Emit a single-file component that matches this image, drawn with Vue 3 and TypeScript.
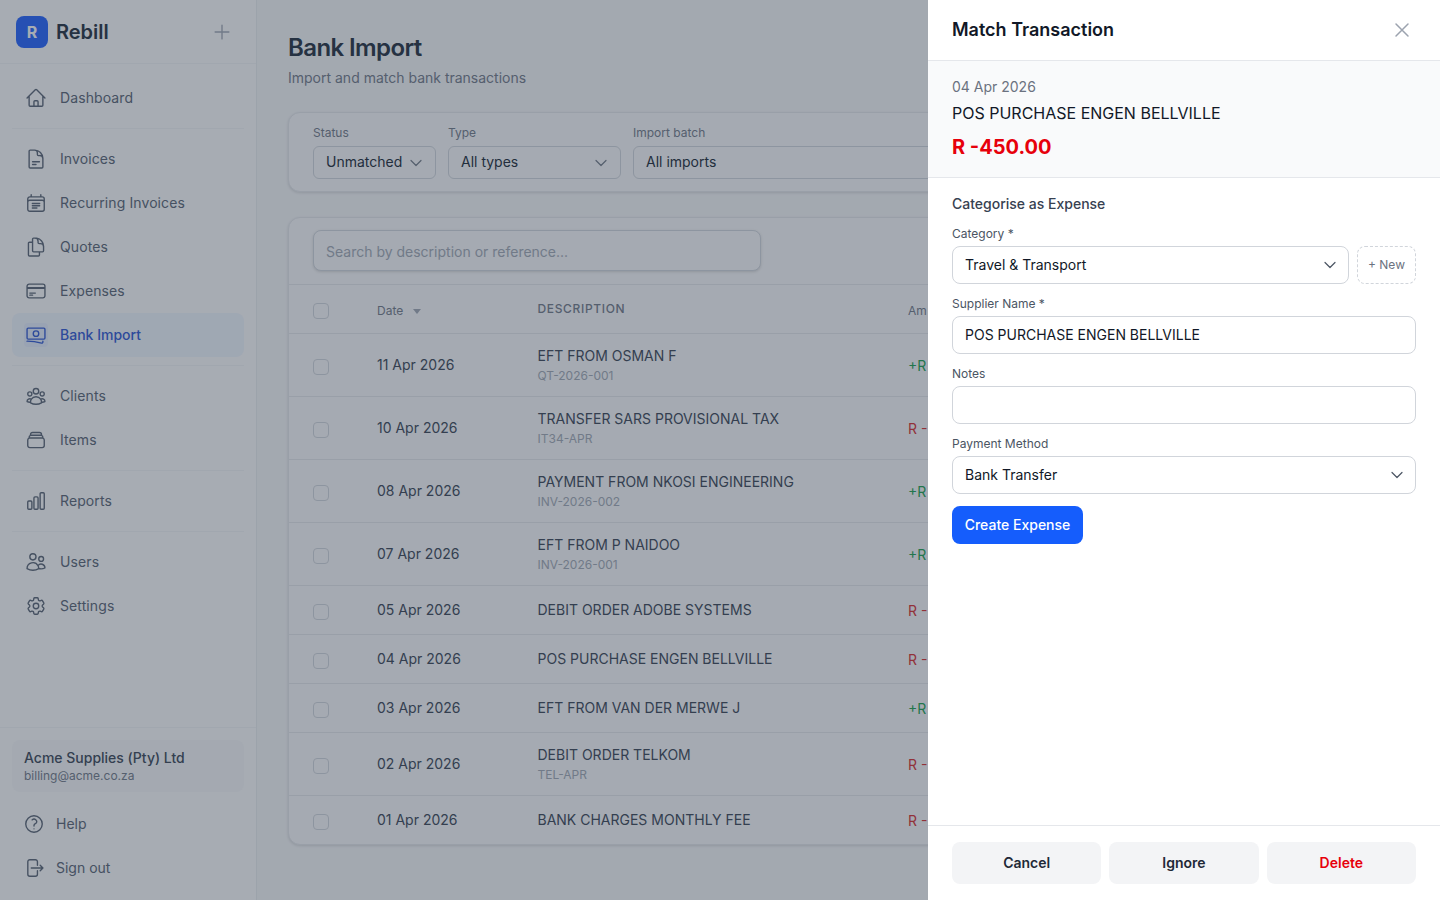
<script setup lang="ts">
interface NavItem { label: string; icon: string; active?: boolean }
const icons: Record<string, string> = {
  home: 'M2.25 12l8.954-8.955c.44-.439 1.152-.439 1.591 0L21.75 12M4.5 9.75v10.125c0 .621.504 1.125 1.125 1.125H9.75v-4.875c0-.621.504-1.125 1.125-1.125h2.25c.621 0 1.125.504 1.125 1.125V21h4.125c.621 0 1.125-.504 1.125-1.125V9.75M8.25 21h8.25',
  doc: 'M8.25 15h7.5m-7.5 3H12M10.5 2.25H5.625c-.621 0-1.125.504-1.125 1.125v17.25c0 .621.504 1.125 1.125 1.125h12.75c.621 0 1.125-.504 1.125-1.125V11.25a9 9 0 00-9-9zM10.5 2.25c1.6 0 3 1.4 3 3v1.9c0 .6.5 1.1 1.1 1.1h1.5a3.375 3.375 0 013.4 3',
  cal: 'M6.75 3v2.25M17.25 3v2.25M3 18.75V7.5a2.25 2.25 0 012.25-2.25h13.5A2.25 2.25 0 0121 7.5v11.25m-18 0A2.25 2.25 0 005.25 21h13.5A2.25 2.25 0 0021 18.75m-18 0v-7.5A2.25 2.25 0 015.25 9h13.5A2.25 2.25 0 0121 11.25v7.5M8 12.5h8M8 15h8M8 17.5h5',
  dup: 'M15.75 17.25v3.375c0 .621-.504 1.125-1.125 1.125h-9.75a1.125 1.125 0 01-1.125-1.125V7.875c0-.621.504-1.125 1.125-1.125H6.75a9.06 9.06 0 011.5.124m7.5 10.376h3.375c.621 0 1.125-.504 1.125-1.125V11.25c0-4.46-3.243-8.161-7.5-8.876a9.06 9.06 0 00-1.5-.124H9.375c-.621 0-1.125.504-1.125 1.125v3.5m7.5 10.375H9.375a1.125 1.125 0 01-1.125-1.125v-9.25m12 6.625v-1.875a3.375 3.375 0 00-3.375-3.375h-1.5a1.125 1.125 0 01-1.125-1.125v-1.5a3.375 3.375 0 00-3.375-3.375H9.75',
  card: 'M2.25 8.25h19.5M2.25 9h19.5m-16.5 5.25h6m-6 2.25h3m-3.75 3h15a2.25 2.25 0 002.25-2.25V6.75A2.25 2.25 0 0019.5 4.5h-15a2.25 2.25 0 00-2.25 2.25v10.5A2.25 2.25 0 004.5 19.5z',
  bank: 'M2.25 18.75a60.07 60.07 0 0115.797 2.101c.727.198 1.453-.342 1.453-1.096V18.75M3.375 4.5h17.25c.621 0 1.125.504 1.125 1.125v9.75c0 .621-.504 1.125-1.125 1.125H3.375a1.125 1.125 0 01-1.125-1.125v-9.75c0-.621.504-1.125 1.125-1.125zM15 10.5a3 3 0 11-6 0 3 3 0 016 0z',
  group: 'M18 18.72a9.094 9.094 0 003.741-.479 3 3 0 00-4.682-2.72m.94 3.198l.001.031c0 .225-.012.447-.037.666A11.944 11.944 0 0112 21c-2.17 0-4.207-.576-5.963-1.584A6.062 6.062 0 016 18.719m12 0a5.971 5.971 0 00-.941-3.197m0 0A5.995 5.995 0 0012 12.75a5.995 5.995 0 00-5.058 2.772m0 0a3 3 0 00-4.681 2.72 8.986 8.986 0 003.74.477m.94-3.197a5.971 5.971 0 00-.94 3.197M15 6.75a3 3 0 11-6 0 3 3 0 016 0zm6 3a2.25 2.25 0 11-4.5 0 2.25 2.25 0 014.5 0zm-13.5 0a2.25 2.25 0 11-4.5 0 2.25 2.25 0 014.5 0z',
  stack: 'M6 6.878V6a2.25 2.25 0 012.25-2.25h7.5A2.25 2.25 0 0118 6v.878m-12 0c.235-.083.487-.128.75-.128h10.5c.263 0 .515.045.75.128m-12 0A2.25 2.25 0 004.5 9v.878m13.5-3A2.25 2.25 0 0119.5 9v.878m0 0a2.246 2.246 0 00-.75-.128H5.25c-.263 0-.515.045-.75.128m15 0A2.25 2.25 0 0121 12v6a2.25 2.25 0 01-2.25 2.25H5.25A2.25 2.25 0 013 18v-6c0-.98.626-1.813 1.5-2.122',
  chart: 'M3 13.125C3 12.504 3.504 12 4.125 12h2.25c.621 0 1.125.504 1.125 1.125v6.75C7.5 20.496 6.996 21 6.375 21h-2.25A1.125 1.125 0 013 19.875v-6.75zM9.75 8.625c0-.621.504-1.125 1.125-1.125h2.25c.621 0 1.125.504 1.125 1.125v11.25c0 .621-.504 1.125-1.125 1.125h-2.25a1.125 1.125 0 01-1.125-1.125V8.625zM16.5 4.125c0-.621.504-1.125 1.125-1.125h2.25C20.496 3 21 3.504 21 4.125v15.75c0 .621-.504 1.125-1.125 1.125h-2.25a1.125 1.125 0 01-1.125-1.125V4.125z',
  users: 'M15 19.128a9.38 9.38 0 002.625.372 9.337 9.337 0 004.121-.952 4.125 4.125 0 00-7.533-2.493M15 19.128v-.003c0-1.113-.285-2.16-.786-3.07M15 19.128v.106A12.318 12.318 0 018.624 21c-2.331 0-4.512-.645-6.374-1.766l-.001-.109a6.375 6.375 0 0111.964-3.07M12 6.375a3.375 3.375 0 11-6.75 0 3.375 3.375 0 016.75 0zm8.25 2.25a2.625 2.625 0 11-5.25 0 2.625 2.625 0 015.25 0z',
  cog: 'M9.594 3.94c.09-.542.56-.94 1.11-.94h2.593c.55 0 1.02.398 1.11.94l.213 1.281c.063.374.313.686.645.87.074.04.147.083.22.127.324.196.72.257 1.075.124l1.217-.456a1.125 1.125 0 011.37.49l1.296 2.247a1.125 1.125 0 01-.26 1.431l-1.003.827c-.293.24-.438.613-.431.992a6.759 6.759 0 010 .255c-.007.378.138.75.43.99l1.005.828c.424.35.534.954.26 1.43l-1.298 2.247a1.125 1.125 0 01-1.369.491l-1.217-.456c-.355-.133-.75-.072-1.076.124a6.57 6.57 0 01-.22.128c-.331.183-.581.495-.644.869l-.213 1.28c-.09.543-.56.941-1.11.941h-2.594c-.55 0-1.02-.398-1.11-.94l-.213-1.281c-.062-.374-.312-.686-.644-.87a6.52 6.52 0 01-.22-.127c-.325-.196-.72-.257-1.076-.124l-1.217.456a1.125 1.125 0 01-1.369-.49l-1.297-2.247a1.125 1.125 0 01.26-1.431l1.004-.827c.292-.24.437-.613.43-.992a6.932 6.932 0 010-.255c.007-.378-.138-.75-.43-.99l-1.004-.828a1.125 1.125 0 01-.26-1.43l1.297-2.247a1.125 1.125 0 011.37-.491l1.216.456c.356.133.751.072 1.076-.124.072-.044.146-.087.22-.128.332-.183.582-.495.644-.869l.214-1.281zM15 12a3 3 0 11-6 0 3 3 0 016 0z',
  help: 'M9.879 7.519c1.171-1.025 3.071-1.025 4.242 0 1.172 1.025 1.172 2.687 0 3.712-.203.179-.43.326-.67.442-.745.361-1.45.999-1.45 1.827v.75M21 12a9 9 0 11-18 0 9 9 0 0118 0zm-9 5.25h.008v.008H12v-.008z',
  out: 'M15.75 9V5.25A2.25 2.25 0 0013.5 3h-6a2.25 2.25 0 00-2.25 2.25v13.5A2.25 2.25 0 007.5 21h6a2.25 2.25 0 002.25-2.25V15m3 0l3-3m0 0l-3-3m3 3H9',
}
const navGroups: NavItem[][] = [
  [{ label: 'Dashboard', icon: 'home' }],
  [
    { label: 'Invoices', icon: 'doc' },
    { label: 'Recurring Invoices', icon: 'cal' },
    { label: 'Quotes', icon: 'dup' },
    { label: 'Expenses', icon: 'card' },
    { label: 'Bank Import', icon: 'bank', active: true },
  ],
  [
    { label: 'Clients', icon: 'group' },
    { label: 'Items', icon: 'stack' },
  ],
  [{ label: 'Reports', icon: 'chart' }],
  [
    { label: 'Users', icon: 'users' },
    { label: 'Settings', icon: 'cog' },
  ],
]
const rows = [
  { date: '11 Apr 2026', desc: 'EFT FROM OSMAN F', ref: 'QT-2026-001', pos: true },
  { date: '10 Apr 2026', desc: 'TRANSFER SARS PROVISIONAL TAX', ref: 'IT34-APR', pos: false },
  { date: '08 Apr 2026', desc: 'PAYMENT FROM NKOSI ENGINEERING', ref: 'INV-2026-002', pos: true },
  { date: '07 Apr 2026', desc: 'EFT FROM P NAIDOO', ref: 'INV-2026-001', pos: true },
  { date: '05 Apr 2026', desc: 'DEBIT ORDER ADOBE SYSTEMS', ref: '', pos: false },
  { date: '04 Apr 2026', desc: 'POS PURCHASE ENGEN BELLVILLE', ref: '', pos: false },
  { date: '03 Apr 2026', desc: 'EFT FROM VAN DER MERWE J', ref: '', pos: true },
  { date: '02 Apr 2026', desc: 'DEBIT ORDER TELKOM', ref: 'TEL-APR', pos: false },
  { date: '01 Apr 2026', desc: 'BANK CHARGES MONTHLY FEE', ref: '', pos: false },
]
const chevron = 'M19.5 8.25l-7.5 7.5-7.5-7.5'
</script>

<template>
  <div class="app">
    <aside class="sidebar">
      <div class="brand">
        <span class="logo">R</span>
        <span class="brand-name">Rebill</span>
        <svg class="plus" viewBox="0 0 24 24"><path d="M12 4.5v15m7.5-7.5h-15" /></svg>
      </div>
      <nav class="nav">
        <div v-for="(group, g) in navGroups" :key="g" class="nav-group">
          <a v-for="item in group" :key="item.label" class="nav-item" :class="{ active: item.active }">
            <span class="nav-icon"><svg viewBox="0 0 24 24"><path :d="icons[item.icon]" /></svg></span>
            {{ item.label }}
          </a>
        </div>
      </nav>
      <div class="side-foot">
        <div class="account">
          <div class="account-name">Acme Supplies (Pty) Ltd</div>
          <div class="account-mail">billing@acme.co.za</div>
        </div>
        <a class="foot-item"><svg viewBox="0 0 24 24"><path :d="icons.help" /></svg>Help</a>
        <a class="foot-item"><svg viewBox="0 0 24 24"><path :d="icons.out" /></svg>Sign out</a>
      </div>
    </aside>

    <main class="main">
      <h1 class="title">Bank Import</h1>
      <p class="subtitle">Import and match bank transactions</p>

      <section class="card filters">
        <div class="filter">
          <span class="filter-label">Status</span>
          <div class="filter-select w-status">Unmatched<svg viewBox="0 0 24 24"><path :d="chevron" /></svg></div>
        </div>
        <div class="filter">
          <span class="filter-label">Type</span>
          <div class="filter-select w-type">All types<svg viewBox="0 0 24 24"><path :d="chevron" /></svg></div>
        </div>
        <div class="filter">
          <span class="filter-label">Import batch</span>
          <div class="filter-select w-batch">All imports</div>
        </div>
      </section>

      <section class="card table-card">
        <div class="search-wrap">
          <input class="search" placeholder="Search by description or reference..." />
        </div>
        <div class="row head">
          <span class="check"></span>
          <span class="col-date">Date <i class="caret"></i></span>
          <span class="col-desc head-desc">DESCRIPTION</span>
          <span class="col-amt">Am</span>
        </div>
        <div v-for="r in rows" :key="r.date" class="row" :class="{ tall: r.ref }">
          <span class="check"></span>
          <span class="col-date cell-date">{{ r.date }}</span>
          <div class="col-desc">
            <div class="desc">{{ r.desc }}</div>
            <div v-if="r.ref" class="ref">{{ r.ref }}</div>
          </div>
          <span class="col-amt" :class="r.pos ? 'pos' : 'neg'">{{ r.pos ? '+R' : 'R -' }}</span>
        </div>
      </section>
    </main>

    <div class="backdrop"></div>

    <aside class="panel">
      <header class="panel-head">
        <h2>Match Transaction</h2>
        <svg class="close" viewBox="0 0 24 24"><path d="M6 6l12 12M18 6L6 18" /></svg>
      </header>
      <section class="summary">
        <div class="sum-date">04 Apr 2026</div>
        <div class="sum-desc">POS PURCHASE ENGEN BELLVILLE</div>
        <div class="sum-amt">R -450.00</div>
      </section>
      <section class="form">
        <div class="form-title">Categorise as Expense</div>
        <div class="field">
          <label>Category *</label>
          <div class="cat-row">
            <div class="control select">Travel &amp; Transport<svg viewBox="0 0 24 24"><path :d="chevron" /></svg></div>
            <button class="new-btn">+ New</button>
          </div>
        </div>
        <div class="field">
          <label>Supplier Name *</label>
          <input class="control" value="POS PURCHASE ENGEN BELLVILLE" />
        </div>
        <div class="field">
          <label>Notes</label>
          <input class="control" />
        </div>
        <div class="field">
          <label>Payment Method</label>
          <div class="control select">Bank Transfer<svg viewBox="0 0 24 24"><path :d="chevron" /></svg></div>
        </div>
        <button class="primary">Create Expense</button>
      </section>
      <footer class="panel-foot">
        <button class="soft">Cancel</button>
        <button class="soft">Ignore</button>
        <button class="soft danger">Delete</button>
      </footer>
    </aside>
  </div>
</template>

<style>
html, body { margin: 0; overflow: hidden; }
</style>

<style scoped>
* { box-sizing: border-box; }
.app {
  position: relative;
  display: flex;
  width: 1440px;
  height: 900px;
  overflow: hidden;
  background: #f9fafb;
  font-family: Inter, "Liberation Sans", sans-serif;
  font-size: 14px;
  line-height: 20px;
  color: #111827;
}
svg { fill: none; stroke: currentColor; stroke-width: 1.5; stroke-linecap: round; stroke-linejoin: round; flex: none; }

/* sidebar */
.sidebar { width: 257px; flex: none; height: 900px; display: flex; flex-direction: column; background: #fff; border-right: 1px solid #eef0f3; }
.brand { height: 64px; flex: none; display: flex; align-items: center; padding: 0 23px 0 16px; border-bottom: 1px solid #f6f7f8; }
.logo { width: 32px; height: 32px; border-radius: 8px; background: #2f6bff; color: #fff; font-size: 16px; font-weight: 700; display: flex; align-items: center; justify-content: center; }
.brand-name { margin-left: 8px; font-size: 20px; line-height: 28px; font-weight: 600; color: #2f3a4a; }
.plus { width: 22px; height: 22px; margin-left: auto; color: #a8afba; }
.nav { flex: 1; padding: 12px 12px 0; }
.nav-group { padding-bottom: 8px; margin-bottom: 8px; border-bottom: 1px solid #f6f7f8; }
.nav-group:last-child { border-bottom: 0; }
.nav-item { height: 44px; display: flex; align-items: center; gap: 12px; padding-left: 12px; border-radius: 8px; font-size: 14px; color: #636d7c; letter-spacing: .1px; }
.nav-icon { width: 24px; height: 24px; display: flex; align-items: center; justify-content: center; border-radius: 4px; }
.nav-icon svg { width: 22px; height: 22px; }
.nav-item.active { background: #f3f8ff; color: #3b62d8; font-weight: 500; letter-spacing: 0; }
.nav-item.active .nav-icon { background: #e9f1ff; }
.side-foot { flex: none; border-top: 1px solid #f6f7f8; padding: 12px 12px 0; height: 173px; }
.account { height: 52px; border-radius: 8px; background: #fafbfc; padding: 8px 12px; margin-bottom: 10px; }
.account-name { font-size: 14px; font-weight: 500; color: #465060; line-height: 20px; }
.account-mail { font-size: 12px; color: #7b8390; line-height: 16px; }
.foot-item { height: 44px; display: flex; align-items: center; gap: 11px; padding-left: 11px; font-size: 14px; color: #636d7c; }
.foot-item svg { width: 22px; height: 22px; }

/* main */
.main { flex: 1; min-width: 0; padding: 32px 32px 0 31px; }
.title { margin: 0; font-size: 24px; line-height: 32px; font-weight: 600; letter-spacing: -.6px; color: #2f3a4a; }
.subtitle { margin: 4px 0 0; font-size: 14px; line-height: 20px; color: #7b8390; }
.card { background: #fcfcfd; border: 1px solid #e8eaee; border-radius: 12px; box-shadow: 0 1px 3px rgba(0,0,0,.12); }
.filters { margin-top: 24px; height: 80px; display: flex; gap: 12px; padding: 12px 24px 0; }
.filter { display: flex; flex-direction: column; gap: 5px; }
.filter-label { font-size: 12px; line-height: 16px; color: #7b8390; }
.filter-select { height: 33px; display: flex; align-items: center; justify-content: space-between; padding: 0 12px 1px; border: 1px solid #d6dae0; border-radius: 6px; font-size: 14px; color: #2a3442; }
.filter-select svg { width: 16px; height: 16px; color: #7b8390; stroke-width: 1.8; margin-right: -1px; position: relative; top: .5px; }
.w-status { width: 123px; }
.w-type { width: 173px; }
.w-batch { width: 400px; }
.table-card { margin-top: 25px; overflow: hidden; }
.search-wrap { padding: 12px 24px; height: 66px; }
.search { display: block; width: 448px; height: 41px; padding: 1px 12px 0; border: 1px solid #d6dae0; border-radius: 8px; font: inherit; font-size: 14px; background: #fcfcfd; box-shadow: 0 1px 3px rgba(0,0,0,.14); outline: 0; }
.search::placeholder { color: #a8afba; }
.row { display: flex; align-items: center; height: 49px; padding-left: 24px; border-top: 1px solid #e8eaee; }
.row.tall { height: 63px; }
.row.head { height: 49px; }
.check { width: 16px; height: 16px; flex: none; border: 1px solid #d6dae0; border-radius: 4px; position: relative; top: 2px; }
.col-date { width: 160.5px; margin-left: 48px; flex: none; font-size: 14px; color: #465060; }
.head .col-date { font-size: 12px; color: #7b8390; display: flex; align-items: center; gap: 10px; position: relative; top: 2px; }
.caret { width: 0; height: 0; border: 4.5px solid transparent; border-top: 5px solid #a8afba; border-bottom: 0; }
.col-desc { width: 370.5px; flex: none; }
.head-desc { font-size: 12px; font-weight: 500; letter-spacing: .65px; color: #7b8390; }
.desc { font-size: 14px; line-height: 20px; color: #465060; }
.ref { font-size: 12px; line-height: 16px; margin-top: 2px; color: #a8afba; }
.col-amt { font-size: 14px; white-space: nowrap; position: relative; top: 1px; }
.head .col-amt { font-size: 12px; color: #7b8390; top: 2px; }
.pos { color: #2ba85a; }
.neg { color: #dc3a3a; }

/* overlay */
.backdrop { position: absolute; inset: 0; background: rgba(24, 38, 54, .38); }
.panel { position: absolute; top: 0; right: 0; bottom: 0; width: 512px; background: #fff; display: flex; flex-direction: column; }
.panel-head { height: 61px; flex: none; display: flex; align-items: center; justify-content: space-between; padding: 0 26px 0 24px; border-bottom: 1px solid #e5e7eb; }
.panel-head h2 { margin: 0; font-size: 18px; line-height: 28px; font-weight: 600; color: #111827; }
.close { width: 24px; height: 24px; color: #9ca3af; }
.summary { height: 117px; flex: none; padding: 16px 24px 0; background: #f9fafb; border-bottom: 1px solid #e5e7eb; }
.sum-date { font-size: 14px; line-height: 20px; color: #6b7280; }
.sum-desc { font-size: 16px; line-height: 24px; margin-top: 4px; color: #111827; }
.sum-amt { font-size: 20px; line-height: 28px; margin-top: 8px; font-weight: 700; color: #e7000b; }
.form { flex: 1; padding: 16px 24px 0; }
.form-title { font-size: 14px; line-height: 20px; font-weight: 500; color: #374151; margin-bottom: 12px; }
.field { margin-bottom: 12px; }
.field label { display: block; font-size: 12px; line-height: 16px; color: #4b5563; margin-bottom: 4px; }
.control { display: block; width: 100%; height: 38px; padding: 0 12px; border: 1px solid #d1d5db; border-radius: 8px; background: #fff; font: inherit; font-size: 14px; color: #111827; outline: 0; }
input.control { padding-bottom: 2px; }
.select { display: flex; align-items: center; justify-content: space-between; }
.select svg { width: 16px; height: 16px; color: #4b5563; stroke-width: 1.8; margin-right: -1.5px; }
.cat-row { display: flex; gap: 8px; }
.cat-row .control { flex: 1; min-width: 0; }
.new-btn { width: 59px; height: 38px; flex: none; padding: 0; border: 1px dashed #d1d5db; border-radius: 8px; background: #fff; font: inherit; font-size: 12px; color: #6b7280; }
.primary { display: block; width: 131px; height: 38px; border: 0; border-radius: 8px; background: #155dfc; color: #fff; font: inherit; font-size: 14px; font-weight: 500; padding: 0; }
.panel-foot { flex: none; height: 75px; display: flex; gap: 8px; padding: 16px 24px; border-top: 1px solid #e5e7eb; }
.soft { flex: 1; height: 42px; border: 0; border-radius: 8px; background: #f3f4f6; font: inherit; font-size: 14px; font-weight: 600; color: #1f2937; padding: 0; }
.danger { color: #e7000b; }
</style>
